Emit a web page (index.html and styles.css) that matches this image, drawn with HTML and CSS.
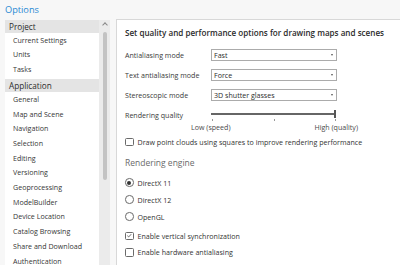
FILE: index.html
```html
<!DOCTYPE html>
<html lang="en">
<head>
    <meta charset="UTF-8">
    <meta name="viewport" content="width=device-width, initial-scale=1.0">
    <title>Options</title>
    <link rel="stylesheet" href="styles.css">
</head>
<body>
    <div class="title">Options</div>
    <div class="main">
        <div class="nav">
            <div class="nav-list">
                <div class="group">
                    <div class="group-head">Project</div>
                    <div class="item">Current Settings</div>
                    <div class="item">Units</div>
                    <div class="item">Tasks</div>
                </div>
                <div class="group">
                    <div class="group-head">Application</div>
                    <div class="item">General</div>
                    <div class="item">Map and Scene</div>
                    <div class="item">Navigation</div>
                    <div class="item">Selection</div>
                    <div class="item">Editing</div>
                    <div class="item">Versioning</div>
                    <div class="item">Geoprocessing</div>
                    <div class="item">ModelBuilder</div>
                    <div class="item">Device Location</div>
                    <div class="item">Catalog Browsing</div>
                    <div class="item">Share and Download</div>
                    <div class="item">Authentication</div>
                </div>
            </div>
            <div class="scrollbar">
                <div class="scroll-up"></div>
                <div class="scroll-thumb"></div>
            </div>
        </div>

        <div class="panel">
            <div class="panel-title">Set quality and performance options for drawing maps and scenes</div>

            <div class="form-row first">
                <div class="label">Antialiasing mode</div>
                <div class="select">Fast<span class="caret"></span></div>
            </div>
            <div class="form-row">
                <div class="label">Text antialiasing mode</div>
                <div class="select">Force<span class="caret"></span></div>
            </div>
            <div class="form-row">
                <div class="label">Stereoscopic mode</div>
                <div class="select">3D shutter glasses<span class="caret"></span></div>
            </div>
            <div class="form-row">
                <div class="label">Rendering quality</div>
                <div class="slider">
                    <div class="slider-bar">
                        <div class="slider-line"></div>
                        <div class="slider-thumb"></div>
                    </div>
                    <div class="ticks"><span></span><span></span><span></span></div>
                </div>
            </div>
            <div class="slider-labels">
                <span>Low (speed)</span>
                <span>High (quality)</span>
            </div>

            <div class="check-row points">
                <span class="box"></span>Draw point clouds using squares to improve rendering performance
            </div>

            <div class="section">Rendering engine</div>

            <div class="check-row radio-first">
                <span class="radio on"></span>DirectX 11
            </div>
            <div class="check-row radio-next">
                <span class="radio"></span>DirectX 12
            </div>
            <div class="check-row radio-next">
                <span class="radio"></span>OpenGL
            </div>

            <div class="check-row vsync">
                <span class="box checked">
                    <svg width="8" height="8" viewBox="0 0 8 8"><path d="M1.6 4.2 L3.3 5.8 L6.4 2.4" fill="none" stroke="#333" stroke-width="0.9"/></svg>
                </span>Enable vertical synchronization
            </div>
            <div class="check-row hw">
                <span class="box"></span>Enable hardware antialiasing
            </div>
        </div>
    </div>
</body>
</html>
```
FILE: styles.css
```css
body {
    margin: 0;
    height: 265px;
    overflow: hidden;
    background: #f7f7f7;
    font-family: "Open Sans", sans-serif;
    font-size: 7.1px;
    color: #333;
}
.title {
    height: 19px;
    line-height: 19px;
    padding-left: 5px;
    font-size: 9.2px;
    color: #2a8ad4;
}
.main {
    display: flex;
    gap: 6px;
    height: 246px;
    overflow: hidden;
}
.nav {
    display: flex;
    width: 105px;
    margin-left: 5px;
    margin-top: 0.5px;
}
.nav-list {
    flex: 1;
    background: white;
    overflow: hidden;
}
.group {
    padding-bottom: 2.4px;
}
.group-head {
    height: 13px;
    line-height: 13px;
    padding-left: 4px;
    background: #e4e4e4;
    color: #2b2b2b;
    font-size: 8.2px;
}
.item {
    height: 14.7px;
    line-height: 14.7px;
    padding-left: 8px;
    color: #363636;
}
.scrollbar {
    width: 11px;
    background: #ebebeb;
    display: flex;
    flex-direction: column;
    align-items: center;
}
.scroll-up {
    width: 3px;
    height: 3px;
    margin-top: 3px;
    margin-left: 1px;
    border-left: 1px solid #888;
    border-top: 1px solid #888;
    transform: rotate(45deg);
}
.scroll-thumb {
    width: 4.6px;
    height: 148px;
    margin-top: 5px;
    margin-left: 1px;
    border-radius: 2px;
    background: #c3c3c3;
}
.panel {
    flex: 1;
    margin-right: -20px;
    background: white;
    border: 1px solid #d8d8d8;
    border-bottom: none;
    padding: 7px 0 0 8px;
}
.panel-title {
    line-height: 12px;
    font-size: 8.1px;
    font-weight: 600;
    color: #2b2b2b;
}
.form-row {
    display: flex;
    align-items: center;
    height: 12px;
    margin-top: 8px;
}
.form-row.first {
    margin-top: 10px;
}
.label {
    width: 86px;
    color: #3a3a3a;
}
.select {
    position: relative;
    box-sizing: border-box;
    width: 126px;
    height: 12px;
    line-height: 10px;
    padding-left: 2px;
    border: 1px solid #ababab;
    background: white;
    color: #2b2b2b;
}
.caret {
    position: absolute;
    right: 3px;
    top: 4px;
    border-left: 1.5px solid transparent;
    border-right: 1.5px solid transparent;
    border-top: 2px solid #555;
}
.slider {
    width: 125px;
    height: 12px;
}
.slider-bar {
    display: flex;
    align-items: center;
    height: 8px;
    margin-top: 0.5px;
}
.slider-line {
    flex: 1;
    height: 2px;
    background: #666;
}
.slider-thumb {
    width: 2px;
    height: 8px;
    background: #555;
}
.ticks {
    display: flex;
    justify-content: space-between;
    margin-top: 1.5px;
    padding-left: 1px;
}
.ticks span {
    width: 1px;
    height: 2px;
    background: #999;
}
.slider-labels {
    display: flex;
    justify-content: space-between;
    width: 167px;
    margin-left: 66px;
    height: 12px;
    line-height: 12px;
    color: #4a4a4a;
}
.check-row {
    display: flex;
    align-items: center;
    height: 12px;
    color: #333;
}
.points {
    margin-top: 3px;
}
.box, .radio {
    box-sizing: border-box;
    width: 8.5px;
    height: 8.5px;
    margin-right: 4px;
    border: 1px solid #6a6a6a;
    background: white;
    display: flex;
    align-items: center;
    justify-content: center;
}
.box {
    border-radius: 1.5px;
}
.box svg {
    display: block;
    width: 7px;
    height: 7px;
}
.radio {
    border-radius: 50%;
}
.radio.on::after {
    content: "";
    width: 4px;
    height: 4px;
    border-radius: 50%;
    background: #333;
}
.section {
    margin-top: 9.3px;
    line-height: 12px;
    font-size: 8.5px;
    color: #6a6a6a;
}
.radio-first {
    margin-top: 7.4px;
}
.radio-next {
    margin-top: 5px;
}
.vsync {
    margin-top: 7.3px;
}
.hw {
    margin-top: 4.3px;
}
```
